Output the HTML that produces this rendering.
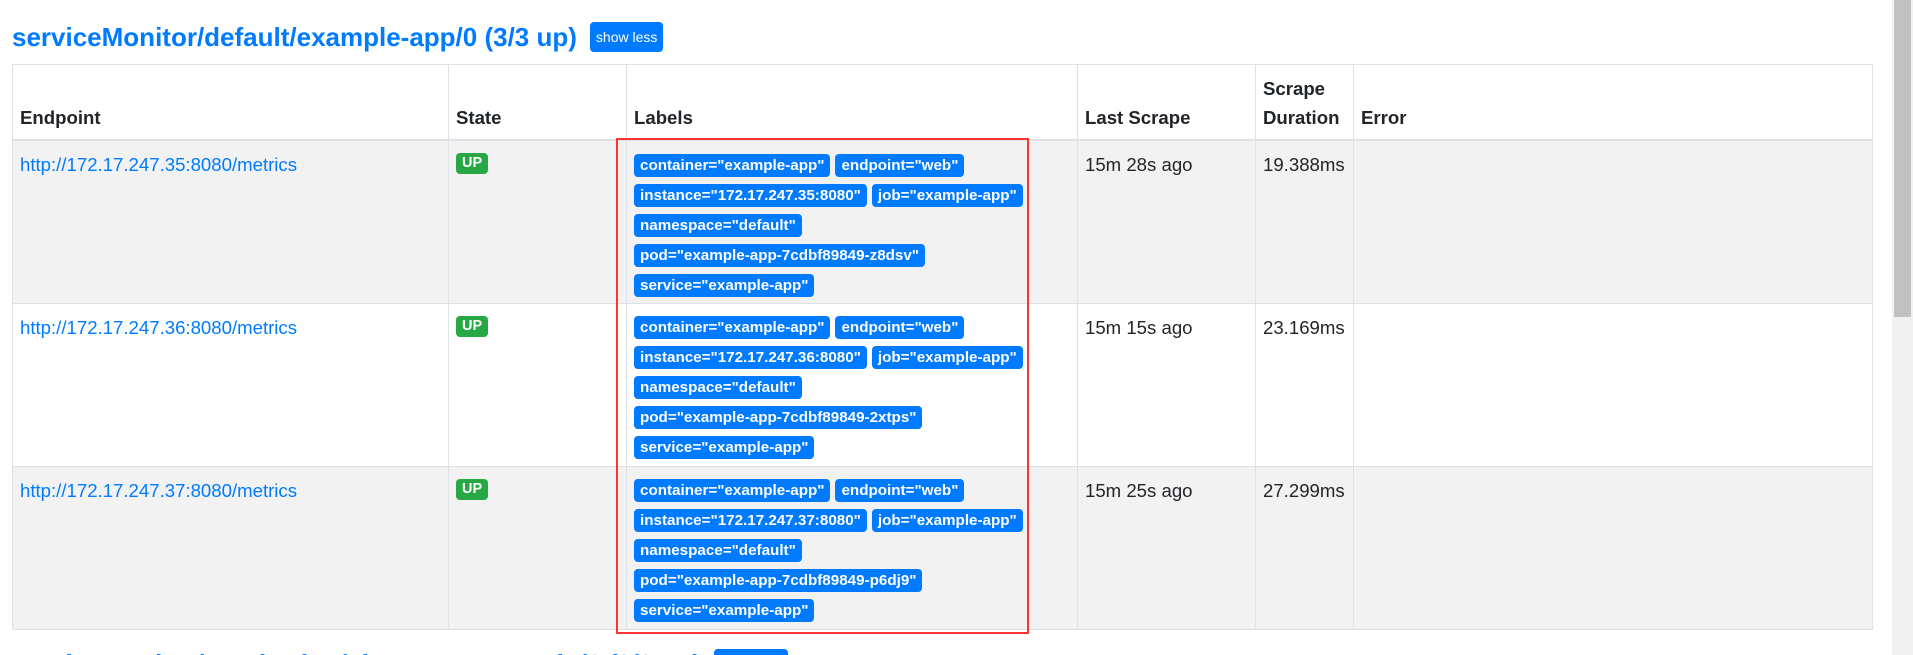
<!DOCTYPE html>
<html style="height:655px;overflow:hidden"><head><meta charset="utf-8"><style>
*{box-sizing:border-box}
body{margin:0;width:1913px;height:655px;overflow:hidden;background:#fff;font-family:"Liberation Sans",sans-serif;color:#212529;position:relative}
h2{position:absolute;left:12px;margin:0;font-size:26px;font-weight:bold;color:#007bff;line-height:30px;white-space:nowrap}
.btn{display:inline-block;background:#007bff;color:#fff;font-size:14px;font-weight:normal;border-radius:4px;padding:0 6px;height:30px;line-height:30px;vertical-align:middle;margin-left:13px;position:relative;top:-2px}
table{position:absolute;left:12px;top:64px;border-collapse:collapse;table-layout:fixed;width:1861px;font-size:18.6px;line-height:29px}
td,th{border:1px solid #dee2e6;padding:9px 7px 0 7px;vertical-align:top;text-align:left}
th{vertical-align:bottom;padding-bottom:7px;font-weight:bold;height:74px;border-bottom:2px solid #dee2e6}
tr.s td{background:#f2f2f2}
tr.r td{height:163px}
a{color:#007bff;text-decoration:none}
.up{display:inline-block;background:#28a745;color:#fff;font-weight:bold;font-size:14.5px;line-height:21px;height:21px;padding:0 6px;border-radius:4px;vertical-align:top;margin-top:3px}
.lb{line-height:30px;font-size:0}
.b{display:inline-block;background:#007bff;color:#fff;font-weight:bold;font-size:15.2px;line-height:23px;height:23px;padding:0 6px;border-radius:4px;margin-right:5px;vertical-align:middle;white-space:nowrap}
.red{position:absolute;left:616px;top:138px;width:413px;height:496px;border:2.5px solid #f33}
.sb{position:absolute;left:1892px;top:0;width:21px;height:655px;background:#f1f1f1}
.th{position:absolute;left:1894px;top:0;width:17px;height:317px;background:#c1c1c1}
.clip{position:absolute;left:0;top:640px;width:1892px;height:15px;overflow:hidden}
</style></head><body>
<h2 style="top:22px">serviceMonitor/default/example-app/0 (3/3 up)<span class="btn">show less</span></h2>
<table>
<colgroup><col style="width:436px"><col style="width:178px"><col style="width:451px"><col style="width:178px"><col style="width:98px"><col></colgroup>
<tr><th>Endpoint</th><th>State</th><th>Labels</th><th>Last Scrape</th><th>Scrape Duration</th><th>Error</th></tr>
<tr class="r s"><td><a>http://172.17.247.35:8080/metrics</a></td><td><span class="up">UP</span></td><td class="lb"><span class="b">container="example-app"</span><span class="b">endpoint="web"</span><br><span class="b">instance="172.17.247.35:8080"</span><span class="b">job="example-app"</span><br><span class="b">namespace="default"</span><br><span class="b">pod="example-app-7cdbf89849-z8dsv"</span><br><span class="b">service="example-app"</span></td><td>15m 28s ago</td><td>19.388ms</td><td></td></tr>
<tr class="r"><td><a>http://172.17.247.36:8080/metrics</a></td><td><span class="up">UP</span></td><td class="lb"><span class="b">container="example-app"</span><span class="b">endpoint="web"</span><br><span class="b">instance="172.17.247.36:8080"</span><span class="b">job="example-app"</span><br><span class="b">namespace="default"</span><br><span class="b">pod="example-app-7cdbf89849-2xtps"</span><br><span class="b">service="example-app"</span></td><td>15m 15s ago</td><td>23.169ms</td><td></td></tr>
<tr class="r s"><td><a>http://172.17.247.37:8080/metrics</a></td><td><span class="up">UP</span></td><td class="lb"><span class="b">container="example-app"</span><span class="b">endpoint="web"</span><br><span class="b">instance="172.17.247.37:8080"</span><span class="b">job="example-app"</span><br><span class="b">namespace="default"</span><br><span class="b">pod="example-app-7cdbf89849-p6dj9"</span><br><span class="b">service="example-app"</span></td><td>15m 25s ago</td><td>27.299ms</td><td></td></tr>
</table>
<div class="red"></div>
<div class="clip"><h2 style="top:9px">serviceMonitor/monitoring/alertmanager-main/0 (2/2 up)<span class="btn">show less</span></h2></div>
<div class="sb"></div><div class="th"></div>
</body></html>
